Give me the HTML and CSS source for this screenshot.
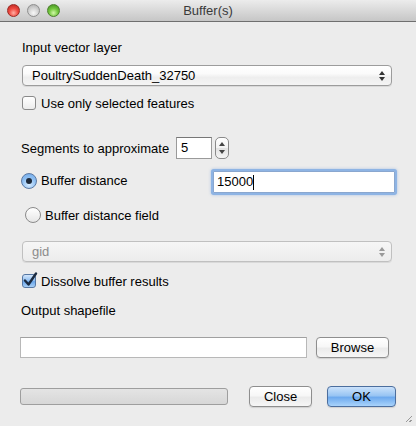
FILE: index.html
```html
<!DOCTYPE html>
<html>
<head>
<meta charset="utf-8">
<link rel="stylesheet" href="styles.css">
</head>
<body>
<div class="window">
  <div class="titlebar">
    <div class="lights">
      <span class="light red"></span>
      <span class="light gray"></span>
      <span class="light green"></span>
    </div>
    <div class="title">Buffer(s)</div>
  </div>
  <div class="content">
    <div class="row label-row r1">Input vector layer</div>
    <div class="combo r2">
      <span class="combo-text">PoultrySuddenDeath_32750</span>
      <span class="arrows"><span class="up"></span><span class="down"></span></span>
    </div>
    <div class="row check-row r3">
      <span class="checkbox"></span>
      <span class="ctext">Use only selected features</span>
    </div>
    <div class="row seg-row r4">
      <span class="seg-label">Segments to approximate</span>
      <span class="spin">5</span>
      <span class="stepper"><span class="up"></span><span class="down"></span></span>
    </div>
    <div class="row radio-row1 r5">
      <span class="radio on"><span class="dot"></span></span>
      <span class="rtext">Buffer distance</span>
      <span class="distance">15000<span class="caret"></span></span>
    </div>
    <div class="row radio-row2 r6">
      <span class="radio"></span>
      <span class="rtext">Buffer distance field</span>
    </div>
    <div class="combo disabled r7">
      <span class="combo-text">gid</span>
      <span class="arrows"><span class="up"></span><span class="down"></span></span>
    </div>
    <div class="row check-row r8">
      <span class="checkbox checked">
        <svg width="16" height="16" viewBox="0 0 16 16"><path d="M3 8.5 L6.5 12.5 L14 1.5" fill="none" stroke="#1b2a40" stroke-width="2.4" stroke-linecap="round" stroke-linejoin="round"/></svg>
      </span>
      <span class="ctext">Dissolve buffer results</span>
    </div>
    <div class="row label-row r9">Output shapefile</div>
    <div class="row out-row r10">
      <span class="outfield"></span>
      <span class="btn browse">Browse</span>
    </div>
    <div class="row bottom-row r11">
      <span class="progress"></span>
      <span class="btn close">Close</span>
      <span class="btn ok">OK</span>
    </div>
  </div>
  <div class="grip"></div>
</div>
</body>
</html>
```
FILE: styles.css
```css
html, body {
  margin: 0;
  padding: 0;
  background: #ececec;
}
.window {
  position: relative;
  width: 416px;
  height: 426px;
  background: #ececec;
  font-family: "Liberation Sans", Arial, sans-serif;
  font-size: 13px;
  color: #000;
  overflow: hidden;
}
.titlebar {
  height: 21px;
  border-bottom: 1px solid #6f6f6f;
  background: linear-gradient(#ececec, #d9d9d9 50%, #c6c6c6);
  display: flex;
  align-items: center;
  position: relative;
  border-radius: 4px 4px 0 0;
}
.lights {
  display: flex;
  gap: 7px;
  padding-left: 7px;
  position: relative;
  z-index: 1;
}
.light {
  width: 13px;
  height: 13px;
  border-radius: 50%;
  box-sizing: border-box;
}
.light.red {
  background: radial-gradient(circle at 50% 72%, #ffb0a4 0, #f04a40 45%, #b3221b 100%);
  border: 1px solid #9a2a24;
}
.light.gray {
  background: radial-gradient(circle at 50% 72%, #f8f8f8 0, #d2d2d2 50%, #a9a9a9 100%);
  border: 1px solid #8f8f8f;
}
.light.green {
  background: radial-gradient(circle at 50% 72%, #d2f8a8 0, #74c83e 45%, #3e8a1d 100%);
  border: 1px solid #4c7f2c;
}
.title {
  position: absolute;
  left: 0;
  right: 0;
  top: 0;
  line-height: 21px;
  text-align: center;
  color: #3a3a3a;
  font-size: 13px;
}
.content {
  display: flex;
  flex-direction: column;
}
.row {
  display: flex;
  align-items: center;
}
.label-row {
  height: 16px;
  padding-left: 22px;
}
.r1 { margin-top: 17px; }
.r2 { margin-top: 10px; }
.r3 { margin-top: 9px; }
.r4 { margin-top: 26px; }
.r5 { margin-top: 12px; }
.r6 { margin-top: 14px; }
.r7 { margin-top: 18px; }
.r8 { margin-top: 11px; }
.r9 { margin-top: 13px; padding-left: 21px; }
.r10 { margin-top: 18px; }
.r11 { margin-top: 28px; }

.combo {
  margin-left: 22px;
  width: 370px;
  height: 21px;
  box-sizing: border-box;
  border: 1px solid #9c9c9c;
  border-radius: 4px;
  background: linear-gradient(#ffffff, #fbfbfb 40%, #eeeeee 60%, #f4f4f4);
  display: flex;
  align-items: center;
  justify-content: space-between;
  box-shadow: 0 1px 0 rgba(0,0,0,0.08);
}
.combo-text {
  padding-left: 9px;
}
.combo.disabled {
  border-color: #c0c0c0;
  background: linear-gradient(#f6f6f6, #f1f1f1 50%, #ececec);
}
.combo.disabled .combo-text {
  color: #8c8c8c;
}
.arrows {
  display: flex;
  flex-direction: column;
  gap: 2px;
  padding-right: 6px;
}
.up, .down {
  width: 0;
  height: 0;
  border-left: 3.5px solid transparent;
  border-right: 3.5px solid transparent;
}
.up { border-bottom: 4px solid #333; }
.down { border-top: 4px solid #333; }
.combo.disabled .up { border-bottom-color: #999; }
.combo.disabled .down { border-top-color: #999; }

.check-row {
  height: 16px;
  padding-left: 22px;
}
.checkbox {
  width: 14px;
  height: 14px;
  box-sizing: border-box;
  border: 1px solid #8a8a8a;
  border-radius: 3px;
  background: linear-gradient(#ffffff, #ececec);
  position: relative;
  margin-right: 5px;
  flex: none;
}
.checkbox.checked {
  background: linear-gradient(#d3e6fb, #8cbcf0 50%, #6aa6ea 55%, #a9d0f7);
  border-color: #5677a3;
}
.checkbox svg {
  position: absolute;
  left: -1px;
  top: -3px;
}

.seg-row {
  height: 22px;
  padding-left: 21px;
}
.seg-label {
  width: 155px;
}
.spin {
  width: 36px;
  height: 22px;
  box-sizing: border-box;
  border: 1px solid #9a9a9a;
  border-top-color: #777;
  background: #fff;
  padding-left: 4px;
  line-height: 20px;
}
.stepper {
  margin-left: 3px;
  width: 14px;
  height: 22px;
  box-sizing: border-box;
  border: 1px solid #8a8a8a;
  border-radius: 5px;
  background: linear-gradient(#ffffff, #f2f2f2 50%, #e2e2e2 52%, #f5f5f5);
  display: flex;
  flex-direction: column;
  align-items: center;
  justify-content: center;
  gap: 4px;
}
.stepper .up { border-left-width: 3px; border-right-width: 3px; border-bottom: 4px solid #444; }
.stepper .down { border-left-width: 3px; border-right-width: 3px; border-top: 4px solid #444; }

.radio-row1 {
  height: 22px;
  padding-left: 21px;
}
.radio {
  width: 16px;
  height: 16px;
  box-sizing: border-box;
  border-radius: 50%;
  border: 1px solid #8a8a8a;
  background: linear-gradient(#ffffff, #e6e6e6);
  display: flex;
  align-items: center;
  justify-content: center;
  flex: none;
  margin-right: 4px;
}
.radio.on {
  border-color: #5b79a3;
  background: radial-gradient(circle at 50% 75%, #d8ecff 0, #8ebff2 55%, #6ea7e8 100%);
}
.dot {
  width: 6px;
  height: 6px;
  border-radius: 50%;
  background: #1e2a3a;
}
.radio-row1 .rtext {
  width: 172px;
  align-self: flex-start;
  margin-top: 2px;
}
.radio-row1 .radio {
  align-self: flex-start;
  margin-top: 2px;
}
.distance {
  width: 182px;
  height: 22px;
  box-sizing: border-box;
  border: 1px solid #8aa7cf;
  background: #fff;
  box-shadow: 0 0 0 2px #8eb4e4, 0 0 3px 2px rgba(100,150,220,0.5);
  border-radius: 1px;
  padding-left: 3px;
  line-height: 20px;
  display: flex;
  align-items: center;
}
.caret {
  width: 1px;
  height: 15px;
  background: #000;
  margin-left: 0;
}

.radio-row2 {
  height: 16px;
  padding-left: 25px;
}

.out-row {
  height: 22px;
  padding-left: 20px;
}
.outfield {
  width: 287px;
  height: 21px;
  box-sizing: border-box;
  border: 1px solid #b8b8b8;
  border-top-color: #a0a0a0;
  background: #fff;
}
.btn {
  height: 21px;
  box-sizing: border-box;
  border: 1px solid #8e8e8e;
  border-radius: 4px;
  background: linear-gradient(#ffffff, #f7f7f7 45%, #ebebeb 55%, #f6f6f6);
  display: flex;
  align-items: center;
  justify-content: center;
  box-shadow: 0 1px 1px rgba(0,0,0,0.12);
}
.browse {
  margin-left: 9px;
  width: 73px;
}
.bottom-row {
  height: 21px;
  padding-left: 20px;
}
.progress {
  width: 208px;
  height: 17px;
  box-sizing: border-box;
  border: 1px solid #9e9e9e;
  border-radius: 3px;
  background: linear-gradient(#e4e4e4, #d7d7d7);
}
.close {
  margin-left: 21px;
  width: 63px;
}
.ok {
  margin-left: 15px;
  width: 69px;
  border-color: #4c6e9e;
  background: linear-gradient(#cbe2fb, #99c5f3 45%, #6eaaee 55%, #a9d3fb);
}
.grip {
  position: absolute;
  right: 4px;
  bottom: 4px;
  width: 6px;
  height: 6px;
  background: linear-gradient(135deg, transparent 45%, #9a9a9a 45%, #9a9a9a 55%, transparent 55%, transparent 75%, #9a9a9a 75%, #9a9a9a 85%, transparent 85%);
}
```
